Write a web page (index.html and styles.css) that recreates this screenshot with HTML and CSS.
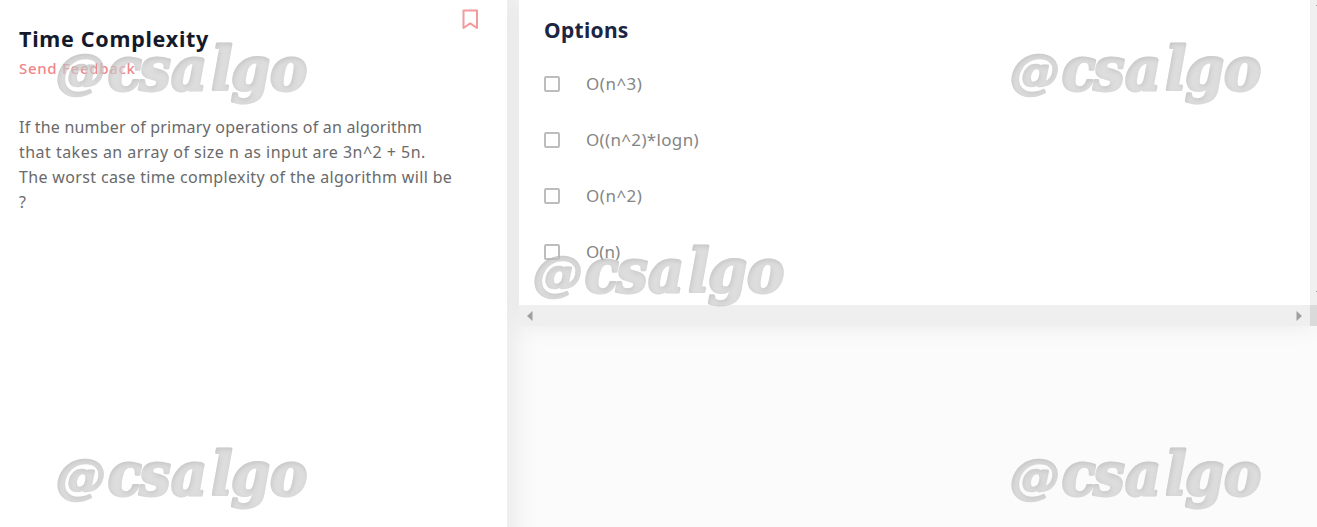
FILE: index.html
```
<!DOCTYPE html>
<html lang="en">
<head>
<meta charset="utf-8">
<title>Time Complexity</title>
<link rel="stylesheet" href="styles.css">
</head>
<body>
<main class="page">
  <section class="problem">
    <header class="problem-head">
      <h1 class="title">Time Complexity</h1>
      <svg class="bookmark" width="18" height="22" viewBox="0 0 18 22"><path d="M2.5 2.5H16V20L9.2 15.4L2.5 20Z" fill="none" stroke="#f29a9c" stroke-width="2" stroke-linejoin="round"/></svg>
    </header>
    <a class="feedback">Send Feedback</a>
    <p class="statement">
      <span class="line l1">If the number of primary operations of an algorithm</span>
      <span class="line l2">that takes an array of size n as input are 3n^2 + 5n.</span>
      <span class="line l3">The worst case time complexity of the algorithm will be</span>
      <span class="line">?</span>
    </p>
  </section>
  <section class="answers">
    <div class="card">
      <div class="options">
        <h2 class="options-title">Options</h2>
        <label class="option"><i class="box"></i><span class="power">O(n^3)</span></label>
        <label class="option"><i class="box"></i><span class="product">O((n^2)*logn)</span></label>
        <label class="option"><i class="box"></i><span class="power">O(n^2)</span></label>
        <label class="option"><i class="box"></i><span>O(n)</span></label>
      </div>
      <div class="vbar"><i class="tick"></i><i class="tick"></i></div>
      <div class="hbar">
        <svg width="6" height="10" viewBox="0 0 6 10"><path d="M5.5 0V10L0 5Z" fill="#a0a0a0"/></svg>
        <svg width="6" height="10" viewBox="0 0 6 10"><path d="M.5 0V10L6 5Z" fill="#a0a0a0"/></svg>
      </div>
      <div class="corner"></div>
    </div>
  </section>
</main>
<svg class="marks" width="1317" height="527" viewBox="0 0 1317 527">
  <defs>
    <filter id="inset" x="-5%" y="-10%" width="110%" height="120%" color-interpolation-filters="sRGB">
      <feOffset in="SourceAlpha" dx="1" dy="2" result="o"/>
      <feGaussianBlur in="o" stdDeviation="2.4" result="b"/>
      <feComposite in="SourceAlpha" in2="b" operator="out" result="edge"/>
      <feFlood flood-color="#777" flood-opacity=".38"/>
      <feComposite in2="edge" operator="in" result="shade"/>
      <feMerge><feMergeNode in="SourceGraphic"/><feMergeNode in="shade"/></feMerge>
    </filter>
    <g id="mark" filter="url(#inset)">
      <text class="mark-at" x="-1" y="47.5" textLength="49" lengthAdjust="spacingAndGlyphs">@</text>
      <text class="mark-text" transform="scale(.93 1)" x="54.5 88.5 122.5 166 187 229" y="50">csalgo</text>
    </g>
  </defs>
  <use href="#mark" x="57" y="40"/>
  <use href="#mark" x="1011" y="40"/>
  <use href="#mark" x="534" y="242"/>
  <use href="#mark" x="57" y="445"/>
  <use href="#mark" x="1011" y="445"/>
</svg>
</body>
</html>
```
FILE: styles.css
```
* { box-sizing: border-box; }
body { margin: 0; overflow: hidden; font-family: "Noto Sans", sans-serif; background: #fff; }
.page { display: grid; grid-template-columns: 507px 810px; height: 527px; }
.problem { padding: 8px 28px 0 19px; }
.problem-head { display: flex; justify-content: space-between; height: 49px; }
.title { margin: 15px 0 0; font-size: 21.5px; line-height: 32px; font-weight: 700; color: #141a2a; letter-spacing: .72px; white-space: nowrap; }
.bookmark { display: block; }
.feedback { display: block; font-size: 15px; line-height: 22px; font-weight: 500; color: #f08688; letter-spacing: .7px; }
.statement { margin: 36px 0 0; font-size: 16px; line-height: 25px; color: #6a6a6a; }
.line { display: block; white-space: nowrap; }
.l1 { letter-spacing: .21px; }
.l2 { letter-spacing: .47px; }
.l3 { letter-spacing: .35px; }
.answers { padding-left: 12px; overflow: hidden; background: linear-gradient(90deg, #eeeeee 0, #f3f3f3 10px, #f8f8f8 18px, #fbfbfb 30px); }
.card { display: grid; grid-template-columns: 791px 7px; grid-template-rows: 305px 21px; box-shadow: 0 0 24px rgba(0,0,0,.07); }
.options { background: #fff; padding: 14px 0 0 25px; }
.options-title { margin: 0 0 14px; font-size: 21px; line-height: 32px; font-weight: 700; color: #1c2541; letter-spacing: .3px; }
.option { display: flex; align-items: center; gap: 26px; height: 48px; margin-bottom: 8px; font-size: 17px; color: #858585; }
.option span { margin-top: -2px; }
.power { letter-spacing: .5px; }
.product { letter-spacing: .33px; }
.box { width: 16px; height: 16px; border: 2px solid #bdbdbd; border-radius: 2px; }
.vbar { background: #f0f0f0; display: flex; flex-direction: column; justify-content: space-between; align-items: flex-end; padding: 5px 0 13px; }
.tick { width: 1px; height: 1px; background: #999; }
.hbar { background: #efefef; display: flex; justify-content: space-between; align-items: center; padding: 0 8px; }
.corner { background: #dadada; }
.marks { position: absolute; left: 0; top: 0; pointer-events: none; fill: #d0d0d0; stroke: #d0d0d0; stroke-linejoin: round; opacity: .7; }
.mark-text { font: italic 700 60px "DejaVu Serif", serif; stroke-width: 3px; }
.mark-at { font: italic 700 47px "DejaVu Serif", serif; stroke-width: 2.6px; }
```
